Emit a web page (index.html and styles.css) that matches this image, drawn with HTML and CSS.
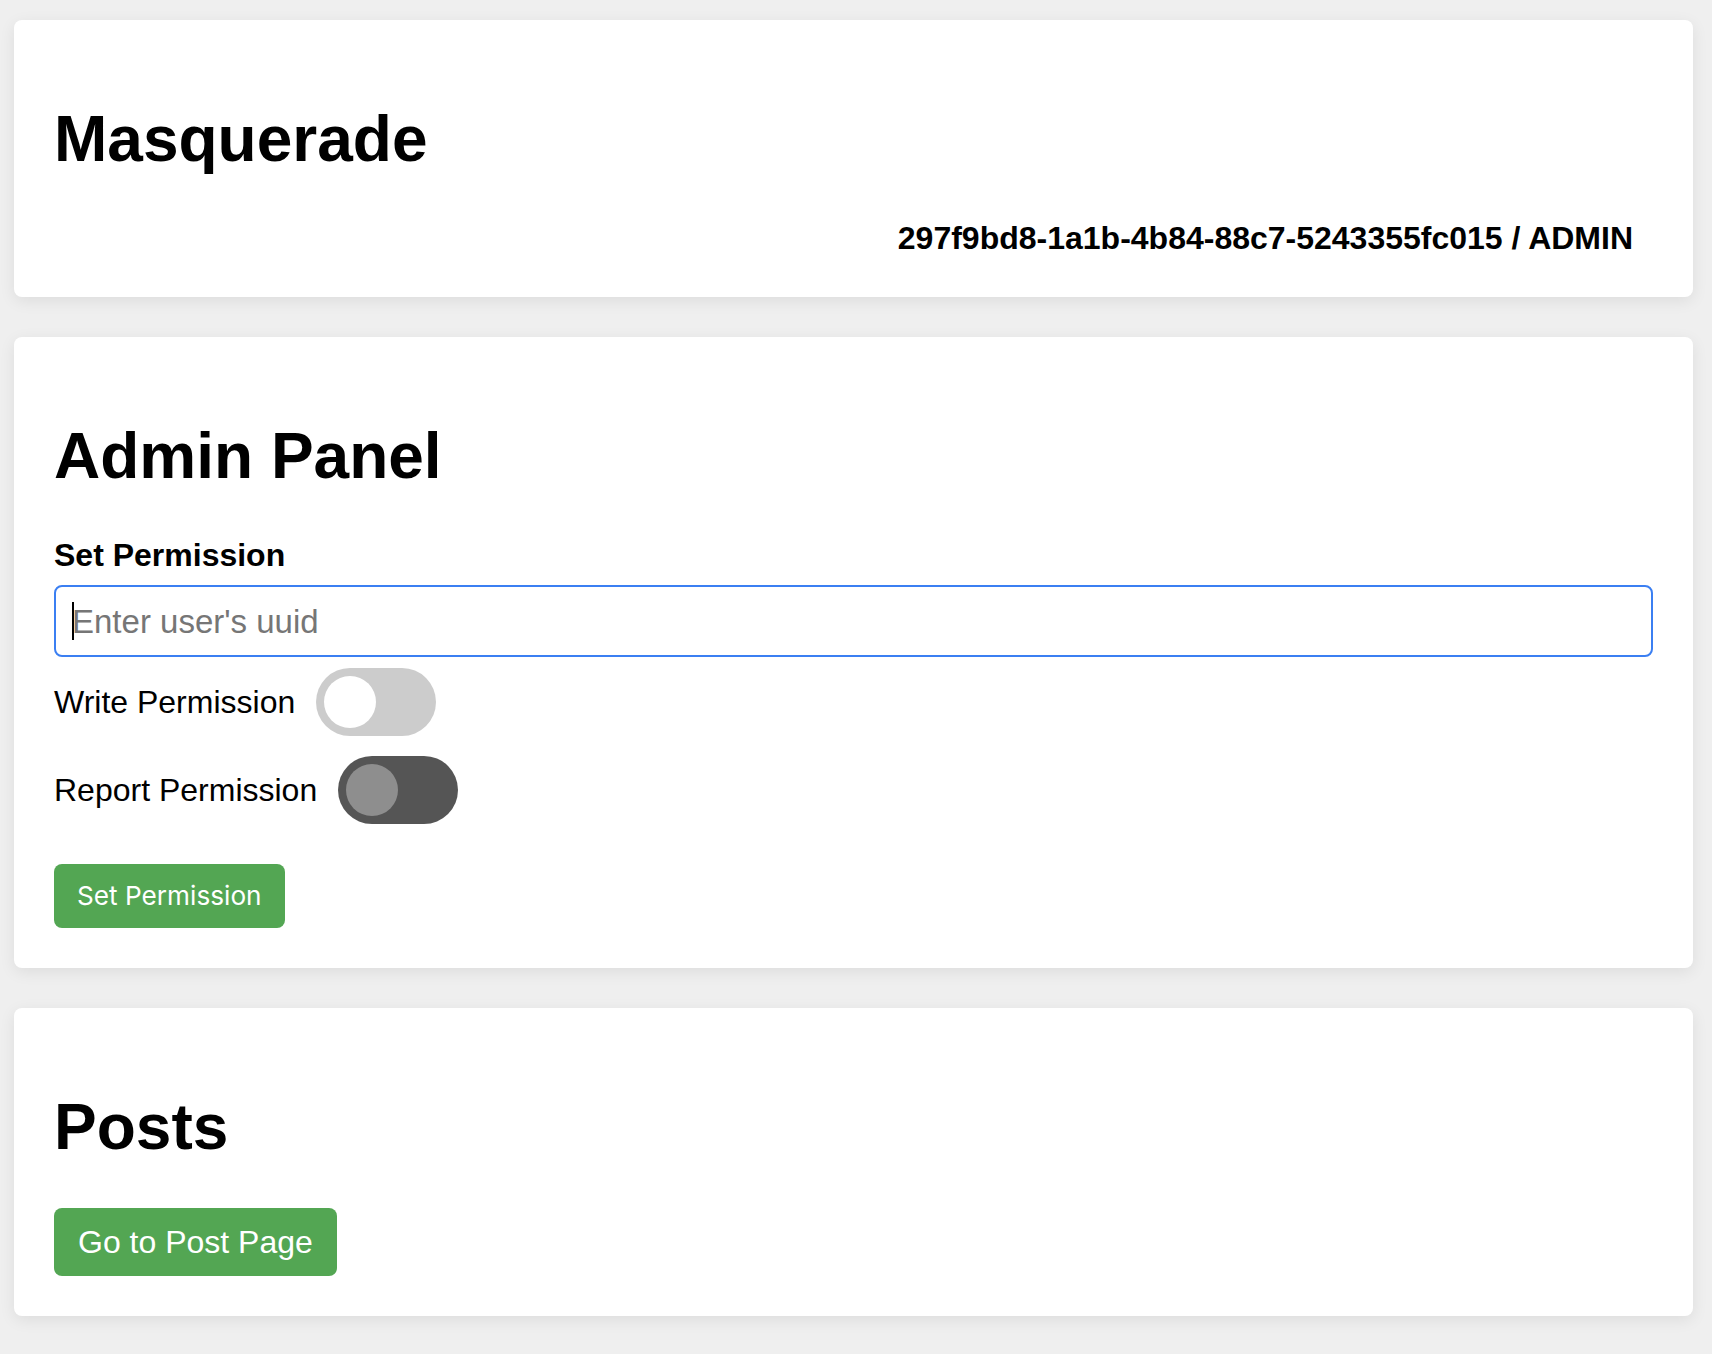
FILE: index.html
```html
<!DOCTYPE html>
<html lang="en">
<head>
<meta charset="utf-8">
<title>Masquerade</title>
<link rel="stylesheet" href="styles.css">
</head>
<body>
<main class="page">
  <section class="card">
    <h1 class="title">Masquerade</h1>
    <div class="user-id">297f9bd8-1a1b-4b84-88c7-5243355fc015 / ADMIN</div>
  </section>

  <section class="card">
    <h1 class="title">Admin Panel</h1>
    <label class="field-label" for="uuid">Set Permission</label>
    <div class="input-wrap">
      <input id="uuid" class="text-input" type="text" placeholder="Enter user's uuid">
      <span class="caret"></span>
    </div>
    <div class="toggles">
      <div class="toggle-row">
        <span class="toggle-label">Write Permission</span>
        <span class="switch"><span class="knob"></span></span>
      </div>
      <div class="toggle-row">
        <span class="toggle-label">Report Permission</span>
        <span class="switch switch-dark"><span class="knob"></span></span>
      </div>
    </div>
    <button class="btn btn-system" type="button">Set Permission</button>
  </section>

  <section class="card">
    <h1 class="title">Posts</h1>
    <button class="btn btn-sans" type="button">Go to Post Page</button>
  </section>
</main>
</body>
</html>
```

FILE: styles.css
```css
* {
  box-sizing: border-box;
}

html, body {
  margin: 0;
  padding: 0;
  background: #efefef;
}

body {
  font-family: "Liberation Sans", Arial, Helvetica, sans-serif;
  color: #000;
}

.page {
  display: flex;
  flex-direction: column;
  gap: 40px;
  padding: 20px 19px 38px 14px;
}

.card {
  background: #fff;
  border-radius: 8px;
  padding: 40px;
  box-shadow: 0 4px 16px rgba(0, 0, 0, 0.08);
  display: flex;
  flex-direction: column;
  align-items: flex-start;
}

.title {
  font-size: 64px;
  font-weight: 700;
  line-height: 73.5px;
  margin: 43px 0;
}

.user-id {
  align-self: stretch;
  text-align: right;
  font-size: 32px;
  font-weight: 700;
  line-height: 37px;
  padding-right: 20px;
}

.field-label {
  display: block;
  font-size: 32px;
  font-weight: 700;
  line-height: 37px;
  margin-top: 1px;
  margin-bottom: 11px;
}

.input-wrap {
  position: relative;
  align-self: stretch;
}

.text-input {
  display: block;
  width: 100%;
  height: 72px;
  padding: 2px 16px 0;
  border: 2px solid #3b7ff2;
  border-radius: 8px;
  font-family: "Liberation Sans", Arial, Helvetica, sans-serif;
  font-size: 33px;
  color: #000;
  background: #fff;
  outline: none;
}

.text-input::placeholder {
  color: #767676;
}

.caret {
  position: absolute;
  left: 18px;
  top: 17px;
  width: 2px;
  height: 38px;
  background: #000;
}

.toggles {
  display: flex;
  flex-direction: column;
  gap: 20px;
  margin-top: 11px;
}

.toggle-row {
  display: flex;
  align-items: center;
  gap: 21px;
}

.toggle-label {
  font-size: 32px;
  line-height: 37px;
}

.switch {
  display: flex;
  align-items: center;
  width: 120px;
  height: 68px;
  padding: 8px;
  border-radius: 34px;
  background: #cccccc;
}

.knob {
  width: 52px;
  height: 52px;
  border-radius: 50%;
  background: #ffffff;
}

.switch-dark {
  background: #555555;
}

.switch-dark .knob {
  background: #8e8e8e;
}

.btn {
  border: none;
  border-radius: 8px;
  background: #53a653;
  color: #fff;
  padding: 16px 24px;
  cursor: pointer;
}

.btn-system {
  margin-top: 40px;
  height: 64px;
  font-family: Inter, "Noto Sans", sans-serif;
  font-size: 26.2px;
  line-height: 32px;
  padding: 16px 23px;
}

.btn-sans {
  height: 68px;
  font-family: "Liberation Sans", Arial, Helvetica, sans-serif;
  font-size: 32px;
  line-height: 36px;
}
```
